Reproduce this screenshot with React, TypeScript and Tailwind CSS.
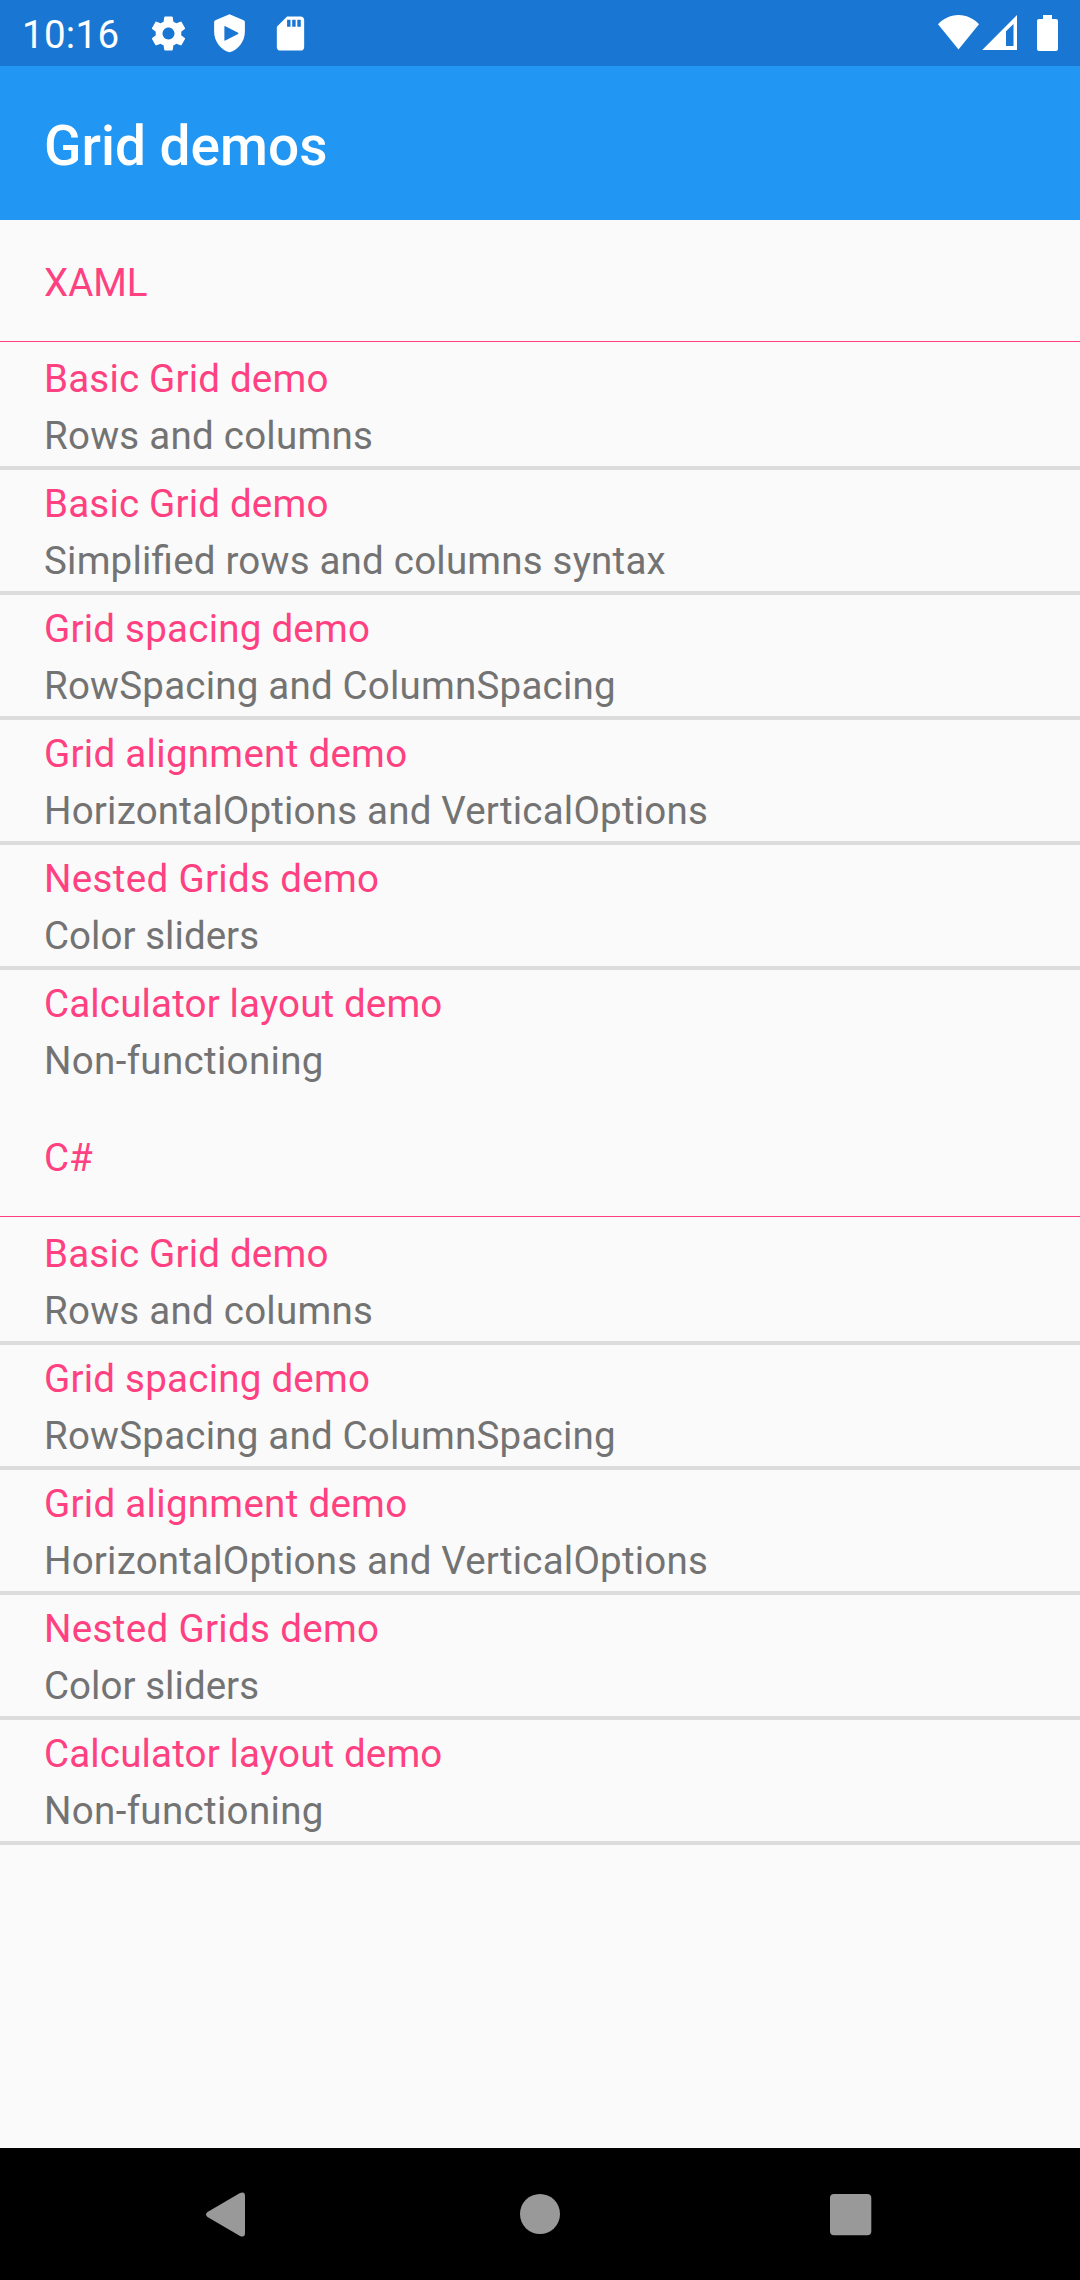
type Item = { title: string; titleClass: string; detail: string; detailClass: string };

const basic: Item = {
  title: "Basic Grid demo",
  titleClass: "tracking-[0.2px]",
  detail: "Rows and columns",
  detailClass: "tracking-[0.25px]",
};
const rest: Item[] = [
  {
    title: "Grid spacing demo",
    titleClass: "tracking-[0.24px]",
    detail: "RowSpacing and ColumnSpacing",
    detailClass: "tracking-[0.21px]",
  },
  {
    title: "Grid alignment demo",
    titleClass: "tracking-[0.29px]",
    detail: "HorizontalOptions and VerticalOptions",
    detailClass: "tracking-[0.2px]",
  },
  {
    title: "Nested Grids demo",
    titleClass: "tracking-[0.34px]",
    detail: "Color sliders",
    detailClass: "tracking-[0.04px]",
  },
  {
    title: "Calculator layout demo",
    titleClass: "tracking-[0.16px]",
    detail: "Non-functioning",
    detailClass: "tracking-[0.33px]",
  },
];
const xamlItems: Item[] = [
  basic,
  {
    title: "Basic Grid demo",
    titleClass: "tracking-[0.2px]",
    detail: "Simplified rows and columns syntax",
    detailClass: "tracking-[0.21px] [font-feature-settings:'liga']",
  },
  ...rest,
];
const csharpItems: Item[] = [basic, ...rest];

function StatusBar() {
  return (
    <div className="flex h-[66px] shrink-0 items-start justify-between bg-[#1976d2] text-white">
      <div className="flex items-start">
        <span className="w-[148px] pl-[22px] pt-[12px] text-[38.5px] leading-[46px] tracking-[0.3px] whitespace-nowrap">10:16</span>
        <div className="flex gap-[20px] pt-[13px]">
          <svg className="size-[41px]" viewBox="0 0 24 24" fill="currentColor">
            <path d="M19.43 12.98c.04-.32.07-.64.07-.98s-.03-.66-.07-.98l2.11-1.65c.19-.15.24-.42.12-.64l-2-3.46c-.12-.22-.39-.3-.61-.22l-2.49 1c-.52-.4-1.08-.73-1.69-.98l-.38-2.65C14.46 2.18 14.25 2 14 2h-4c-.25 0-.46.18-.49.42l-.38 2.65c-.61.25-1.17.59-1.69.98l-2.49-1c-.23-.09-.49 0-.61.22l-2 3.46c-.13.22-.07.49.12.64l2.11 1.65c-.04.32-.07.65-.07.98s.03.66.07.98l-2.11 1.65c-.19.15-.24.42-.12.64l2 3.46c.12.22.39.3.61.22l2.49-1c.52.4 1.08.73 1.69.98l.38 2.65c.03.24.24.42.49.42h4c.25 0 .46-.18.49-.42l.38-2.65c.61-.25 1.17-.59 1.69-.98l2.49 1c.23.09.49 0 .61-.22l2-3.46c.12-.22.07-.49-.12-.64l-2.11-1.65zM12 15.5c-1.93 0-3.5-1.57-3.5-3.5s1.57-3.5 3.5-3.5 3.5 1.57 3.5 3.5-1.57 3.5-3.5 3.5z" />
          </svg>
          <svg className="size-[41px]" viewBox="0 0 24 24" fill="currentColor" fillRule="evenodd">
            <path d="M12 .8 3.7 4.3Q3 4.7 3 5.4V11c0 5.55 3.84 10.74 9 12 5.16-1.26 9-6.45 9-12V5.4q0-.7-.7-1.1zM9 8.1q0-.7.6-.4l7.4 3.8q.6.4 0 .8l-7.4 3.8q-.6.3-.6-.4z" />
          </svg>
          <svg className="size-[41px]" viewBox="0 0 24 24" fill="currentColor">
            <path d="M18 2h-8L4 8v12c0 1.1.9 2 2 2h12c1.1 0 2-.9 2-2V4c0-1.1-.9-2-2-2zm-6 6h-2V4h2v4zm3 0h-2V4h2v4zm3 0h-2V4h2v4z" />
          </svg>
        </div>
      </div>
      <svg className="h-[66px] w-[160px]" viewBox="920 0 160 66" fill="currentColor">
        <path d="M958.5 49.5 938 24.2C943 19 950 15 958.5 15S974 19 979 24.2z" />
        <path fillRule="evenodd" d="M1017 15v35h-34.8zM1013.5 24l-7.5 7.2V46h7.5z" />
        <path d="M1043 15h9v4h4q2 0 2 2v28q0 2-2 2h-17q-2 0-2-2V21q0-2 2-2h4z" />
      </svg>
    </div>
  );
}

function Section({ name, items, endLine }: { name: string; items: Item[]; endLine: boolean }) {
  return (
    <section>
      <h2 className="flex h-[122px] items-center border-b border-[#ff4081] px-11 pt-[5px] text-[#ff4081]">{name}</h2>
      <ul className={endLine ? "pt-[3px]" : "pt-[3px] [&>li:last-child]:border-transparent"}>
        {items.map((item, i) => (
          <li key={i} className="h-[125px] border-b-4 border-[#dcdcdc] px-11 pt-[5px] leading-[57px]">
            <p className={`text-[#ff4081] ${item.titleClass}`}>{item.title}</p>
            <p className={`text-[#737373] ${item.detailClass}`}>{item.detail}</p>
          </li>
        ))}
      </ul>
    </section>
  );
}

export default function App() {
  return (
    <div className="flex h-[2280px] w-[1080px] flex-col overflow-hidden bg-[#fafafa] font-['Roboto',sans-serif] text-[38.5px]">
      <StatusBar />
      <header className="flex h-[154px] shrink-0 items-center bg-[#2196f3] px-11 pt-[6px]">
        <h1 className="text-[55px] font-medium text-white">Grid demos</h1>
      </header>
      <main className="flex-1">
        <Section name="XAML" items={xamlItems} endLine={false} />
        <Section name="C#" items={csharpItems} endLine />
      </main>
      <nav className="h-[132px] shrink-0 bg-black text-[#999999]">
        <svg className="h-[132px] w-[1080px]" viewBox="0 0 1080 132" fill="currentColor">
          <path d="M207.5 64 240 45q5-2 5 3v37q0 5-5 3l-32.500-19q-3-2.500 0-5z" />
          <circle cx="540" cy="66" r="20" />
          <rect x="830" y="46" width="41.300" height="41.300" rx="4" />
        </svg>
      </nav>
    </div>
  );
}
